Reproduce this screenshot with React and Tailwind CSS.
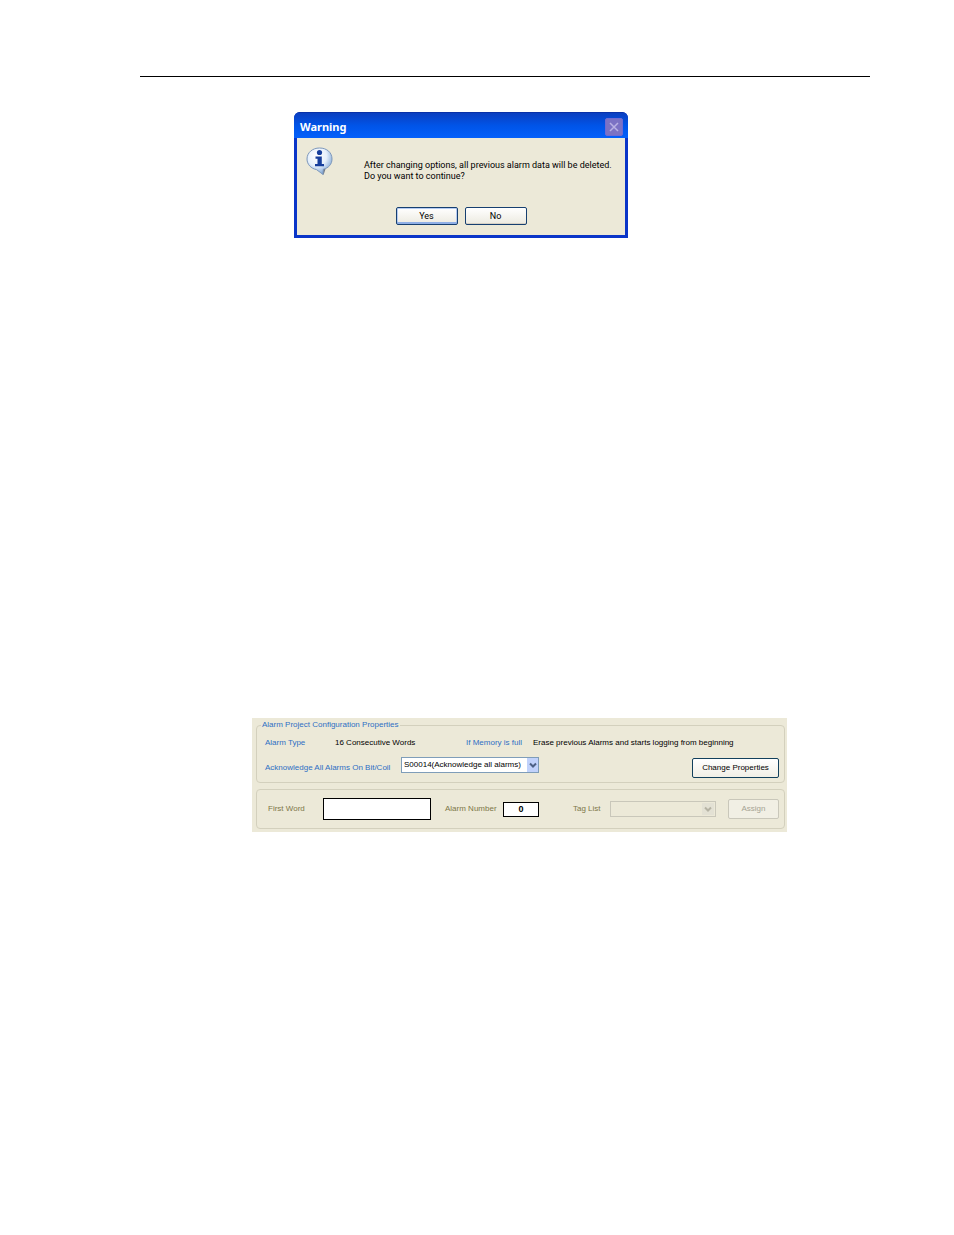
import { useState } from 'react'

const GROUP = 'min-w-0 border border-[#d3d0bd] rounded-[4px]'
const BLUE  = 'text-[#2f6fc4] whitespace-nowrap'
const OLIVE = 'text-[#7d7748] whitespace-nowrap'

function InfoIcon() {
  return (
    <svg viewBox="0 0 28 28" className="w-7 h-7 shrink-0" aria-hidden="true">
      <defs>
        <radialGradient id="bubble" cx="40%" cy="30%" r="70%">
          <stop offset="0%" stopColor="#ffffff" />
          <stop offset="55%" stopColor="#e6f0fb" />
          <stop offset="100%" stopColor="#7fa6d6" />
        </radialGradient>
      </defs>
      <path d="M14 22 17.500 28 19.500 22Z" fill="#6d7480" />
      <path
        d="M13.500 1C6.500 1 1 5.600 1 12c0 5.400 4 9.500 9.500 10.600L17 27.500l.3-5.200C22.500 21 26 17.300 26 12 26 5.600 21 1 13.500 1Z"
        fill="url(#bubble)"
        stroke="#7d97ba"
        strokeWidth="1"
      />
      <circle cx="13.500" cy="5.500" r="2.600" fill="#173f9c" />
      <path d="M9.500 9.500h6.300v7.500h2.200v2.300H9V17h2.500v-5.200h-2Z" fill="#173f9c" />
    </svg>
  )
}

function Chevron({ className }) {
  return (
    <svg viewBox="0 0 8 8" className={`w-2 h-2 ${className}`} fill="none" stroke="currentColor" strokeWidth="2" aria-hidden="true">
      <path d="M1 2.500 4 5.500 7 2.500" />
    </svg>
  )
}

function DialogButton({ children, focused, onClick }) {
  return (
    <button
      onClick={onClick}
      className={`w-[62px] h-[18px] flex items-center justify-center rounded-[2px] border border-[#163f70] bg-linear-to-b from-white to-[#eceae0] ${focused ? 'shadow-[inset_0_-2px_0_#8fafe6,inset_0_0_0_1px_#b5cbf2]' : 'shadow-[inset_0_-1px_0_#d6d0c5]'}`}
    >
      {children}
    </button>
  )
}

function WarningDialog() {
  const [open, setOpen] = useState(true)
  const close = () => setOpen(false)

  return (
    <div className="h-[126px] ml-[154px] w-[334px]">
      {open && (
        <div
          role="alertdialog"
          aria-labelledby="warning-title"
          className="h-full flex flex-col bg-[#0a35c8] rounded-t-[6px] overflow-hidden px-[3px] pb-[3px] font-['Roboto',sans-serif] text-[9px] leading-[11px] text-black"
        >
          {/* Title bar */}
          <div className="h-[26px] -mx-[3px] pl-[6px] pr-[5px] flex items-center justify-between bg-linear-to-b from-[#0a3fc0] via-[#0054e8] to-[#0460fb] border-t border-[#0831a8]">
            <h2 id="warning-title" className="font-['Noto_Sans',sans-serif] text-[11px] leading-[14px] font-bold text-white mt-[3px]">Warning</h2>
            <button
              aria-label="Close"
              onClick={close}
              className="w-[18px] h-[18px] mt-[3px] flex items-center justify-center rounded-[2px] border border-[#6f6ad2] bg-[#7b72c4] text-[#b9b2e4]"
            >
              <svg viewBox="0 0 10 10" className="w-[10px] h-[10px]" stroke="currentColor" strokeWidth="1.500" aria-hidden="true">
                <path d="M1 1 9 9M9 1 1 9" />
              </svg>
            </button>
          </div>

          {/* Message */}
          <div className="grow bg-[#ece9d8]">
            <div className="flex pt-[9px] pl-[9px]">
              <InfoIcon />
              <p className="ml-[30px] mt-[13px] whitespace-nowrap">
                After changing options, all previous alarm data will be deleted.
                <br />
                Do you want to continue?
              </p>
            </div>
            <div className="flex justify-center gap-[7px] mt-[25px]">
              <DialogButton focused onClick={close}>Yes</DialogButton>
              <DialogButton onClick={close}>No</DialogButton>
            </div>
          </div>
        </div>
      )}
    </div>
  )
}

function AlarmPanel() {
  const [ackBit, setAckBit] = useState('S00014')
  const [firstWord, setFirstWord] = useState('')
  const [alarmNumber, setAlarmNumber] = useState('0')

  return (
    <form
      onSubmit={e => e.preventDefault()}
      className="ml-[112px] w-[535px] bg-[#ece9d8] pl-1 pr-[2px] pb-[3px] font-['Liberation_Sans',Arial,sans-serif] text-[8px] leading-[14px] text-black"
    >
      <fieldset className={GROUP}>
        <legend className="ml-1 px-px text-[#2f6fc4]">Alarm Project Configuration Properties</legend>
        <div className="flex items-center pt-1 pl-2">
          <span className={`${BLUE} w-[70px]`}>Alarm Type</span>
          <span className="w-[131px] whitespace-nowrap">16 Consecutive Words</span>
          <span className={`${BLUE} w-[67px]`}>If Memory is full</span>
          <span className="whitespace-nowrap">Erase previous Alarms and starts logging from beginning</span>
        </div>
        <div className="flex items-start pt-[7px] pb-1 pl-2 pr-[5px]">
          <label htmlFor="ack-bit" className={`${BLUE} w-[136px] mt-1`}>Acknowledge All Alarms On Bit/Coil</label>
          <div className="relative w-[138px]">
            <select
              id="ack-bit"
              value={ackBit}
              onChange={e => setAckBit(e.target.value)}
              className="block w-full h-4 pl-[2px] pr-3 appearance-none bg-white border border-[#7f9db9]"
            >
              <option value="S00014">S00014(Acknowledge all alarms)</option>
            </select>
            <span className="absolute right-px top-px w-[11px] h-[14px] flex items-center justify-center bg-[#c1d2fb] pointer-events-none">
              <Chevron className="text-[#4d6185]" />
            </span>
          </div>
          <button type="button" className="ml-auto w-[87px] h-5 mt-px rounded-[2px] border border-[#12405c] bg-linear-to-b from-white to-[#f1efe6] whitespace-nowrap">
            Change Properties
          </button>
        </div>
      </fieldset>

      <fieldset className={`${GROUP} mt-[6px] h-10 pl-[11px] pr-[5px]`}>
        <div className="h-full flex items-center">
          <label htmlFor="first-word" className={`${OLIVE} w-[55px]`}>First Word</label>
          <input
            id="first-word"
            value={firstWord}
            onChange={e => setFirstWord(e.target.value)}
            className="w-[108px] h-[22px] px-1 bg-white border border-black"
          />
          <label htmlFor="alarm-number" className={`${OLIVE} w-[58px] ml-[14px]`}>Alarm Number</label>
          <input
            id="alarm-number"
            value={alarmNumber}
            onChange={e => setAlarmNumber(e.target.value)}
            className="w-9 h-[15px] text-center text-[9px] font-bold bg-white border border-black"
          />
          <label htmlFor="tag-list" className={`${OLIVE} w-[37px] ml-[34px]`}>Tag List</label>
          <div className="relative w-[106px]">
            <select id="tag-list" disabled className="block w-full h-4 appearance-none bg-[#ece9d8] border border-[#c9c7ba]" />
            <span className="absolute right-[2px] top-[2px] w-3 h-3 flex items-center justify-center bg-[#e3e1d4] pointer-events-none">
              <Chevron className="text-[#b5b3a4]" />
            </span>
          </div>
          <button type="button" disabled className="ml-auto w-[51px] h-5 rounded-[2px] border border-[#c9c7ba] bg-[#f1efe4] text-[#a5a393]">
            Assign
          </button>
        </div>
      </fieldset>
    </form>
  )
}

export default function App() {
  return (
    <main className="min-h-screen bg-white pt-[76px] pl-[140px] pr-[84px]">
      <hr className="border-0 h-px bg-black mb-[35px]" />
      <WarningDialog />
      <div className="mt-[480px]">
        <AlarmPanel />
      </div>
    </main>
  )
}
